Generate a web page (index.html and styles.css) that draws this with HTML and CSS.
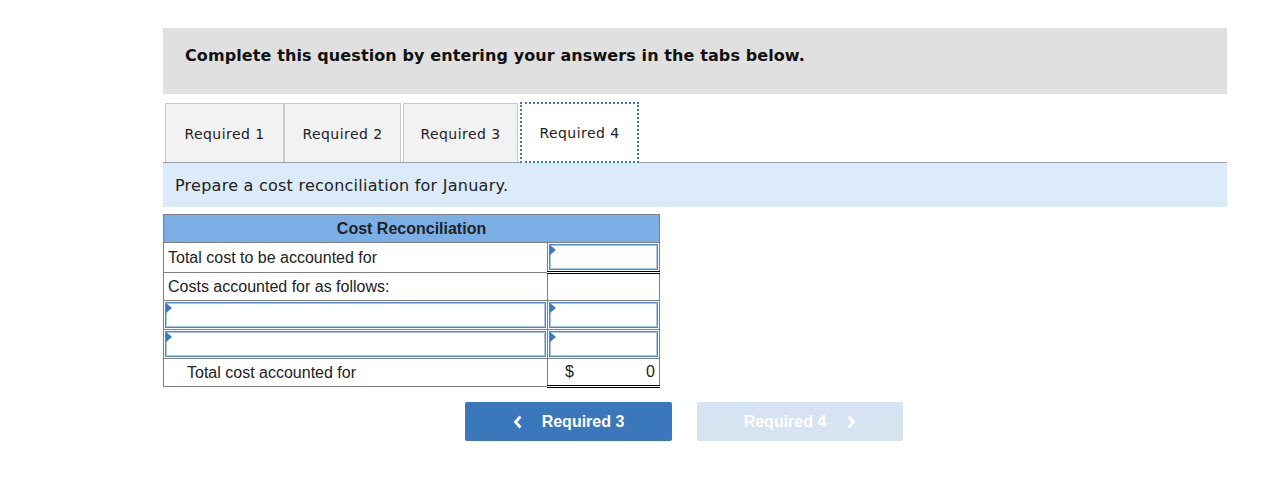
FILE: index.html
```html
<!DOCTYPE html>
<html>
<head>
<meta charset="utf-8">
<link rel="stylesheet" href="styles.css">
</head>
<body>
<div class="wrap">
  <div class="banner">Complete this question by entering your answers in the tabs below.</div>
  <div class="tabs">
    <div class="tab t1">Required 1</div>
    <div class="tab t2">Required 2</div>
    <div class="tab t3">Required 3</div>
    <div class="tab t4 active">Required 4</div>
  </div>
  <div class="instr">Prepare a cost reconciliation for January.</div>
  <table class="rec">
    <colgroup><col class="c1"><col class="c2"></colgroup>
    <tr class="hrow"><th colspan="2">Cost Reconciliation</th></tr>
    <tr>
      <td class="lbl">Total cost to be accounted for</td>
      <td class="incell dbl"><div class="inp"></div></td>
    </tr>
    <tr>
      <td class="lbl">Costs accounted for as follows:</td>
      <td class="val"></td>
    </tr>
    <tr>
      <td class="incell"><div class="inp"></div></td>
      <td class="incell"><div class="inp"></div></td>
    </tr>
    <tr>
      <td class="incell"><div class="inp"></div></td>
      <td class="incell"><div class="inp"></div></td>
    </tr>
    <tr>
      <td class="lbl indent">Total cost accounted for</td>
      <td class="total"><div class="tot"><span class="dollar">$</span><span class="amt">0</span></div></td>
    </tr>
  </table>
  <div class="nav">
    <button class="btn prev"><svg class="chev" width="10" height="14" viewBox="0 0 10 14"><path d="M7.5 1.5 L2.5 7 L7.5 12.5" fill="none" stroke="#fff" stroke-width="2.8"/></svg>Required 3</button>
    <button class="btn next">Required 4<svg class="chev r" width="10" height="14" viewBox="0 0 10 14"><path d="M2.5 1.5 L7.5 7 L2.5 12.5" fill="none" stroke="#fff" stroke-width="2.8"/></svg></button>
  </div>
</div>
</body>
</html>
```
FILE: styles.css
```css
html, body { margin: 0; padding: 0; background: #fff; }
.wrap { padding: 28px 0 0 163px; width: 1064px; }
.banner {
  height: 66px; background: #e0e0e0; box-sizing: border-box;
  padding: 18px 0 0 22px;
  font-family: "DejaVu Sans", Verdana, sans-serif; font-weight: bold; font-size: 16px;
  color: #111; letter-spacing: 0.1px;
}
.tabs {
  display: flex; margin-top: 9px; padding-left: 2px; height: 59px;
  border-bottom: 1px solid #a0a0a8;
}
.tab {
  box-sizing: border-box; height: 59px;
  background: #f2f2f2; border: 1px solid #c8c8c8; border-bottom: none;
  display: flex; align-items: center; justify-content: center;
  font-family: "DejaVu Sans", Verdana, sans-serif; font-size: 14px; color: #222;
  letter-spacing: 0.45px; padding-top: 1px;
}
.t1 { width: 119px; }
.t2 { width: 117px; }
.t3 { width: 115px; margin-left: 2px; }
.t4 { width: 119px; margin-left: 2px; }
.tab.active { background: #fff; border: 2px dotted #3a78c4; height: 61px; margin-top: -1px; }
.instr {
  height: 44px; background: #dbebf9; box-sizing: border-box;
  padding: 13px 0 0 12px;
  font-family: "DejaVu Sans", Verdana, sans-serif; font-size: 16px; color: #222;
  letter-spacing: 0.25px;
}
.rec {
  margin-top: 7px; border-collapse: collapse; width: 496px; table-layout: fixed;
  font-family: "Liberation Sans", Arial, sans-serif; font-size: 16px; color: #222;
  border: 1px solid #7f7f7f;
}
.c1 { width: 384px; }
.c2 { width: 112px; }
.rec th {
  background: #7aaee4; height: 27px; padding: 0; font-weight: bold; color: #222;
  border: 1px solid #7f7f7f; text-align: center;
}
.rec td { border: 1px solid #7f7f7f; padding: 0; height: 28px; box-sizing: border-box; }
.lbl { padding-left: 4px !important; }
.indent { padding-left: 23px !important; }
.incell { padding: 1px !important; }
.dbl { border-bottom: 3px double #000 !important; }
.inp {
  position: relative; height: 26px; box-sizing: border-box;
  border: 1px solid #4f86c9; box-shadow: inset 0 0 0 1px #aac7ea; background: #fff;
}
.inp::before {
  content: ""; position: absolute; left: 0; top: 0;
  border-left: 6px solid #3a78c4; border-top: 5px solid transparent; border-bottom: 5px solid transparent;
}
.total { border-top: 1px solid #000 !important; border-bottom: 3px double #000 !important; }
.tot { display: flex; justify-content: space-between; padding: 0 4px 0 17px; }
.nav { display: flex; gap: 25px; margin-top: 14px; padding-left: 302px; }
.btn {
  width: 207px; height: 39px; border: none; border-radius: 2px;
  font-family: "Liberation Sans", Arial, sans-serif; font-weight: bold; font-size: 16px; color: #fff;
  display: flex; align-items: center; justify-content: center; padding: 0;
}
.prev { background: #3a77bb; }
.next { background: #d6e3f1; width: 206px; }
.chev { margin-right: 19px; }
.chev.r { margin-right: 0; margin-left: 20px; }
```
